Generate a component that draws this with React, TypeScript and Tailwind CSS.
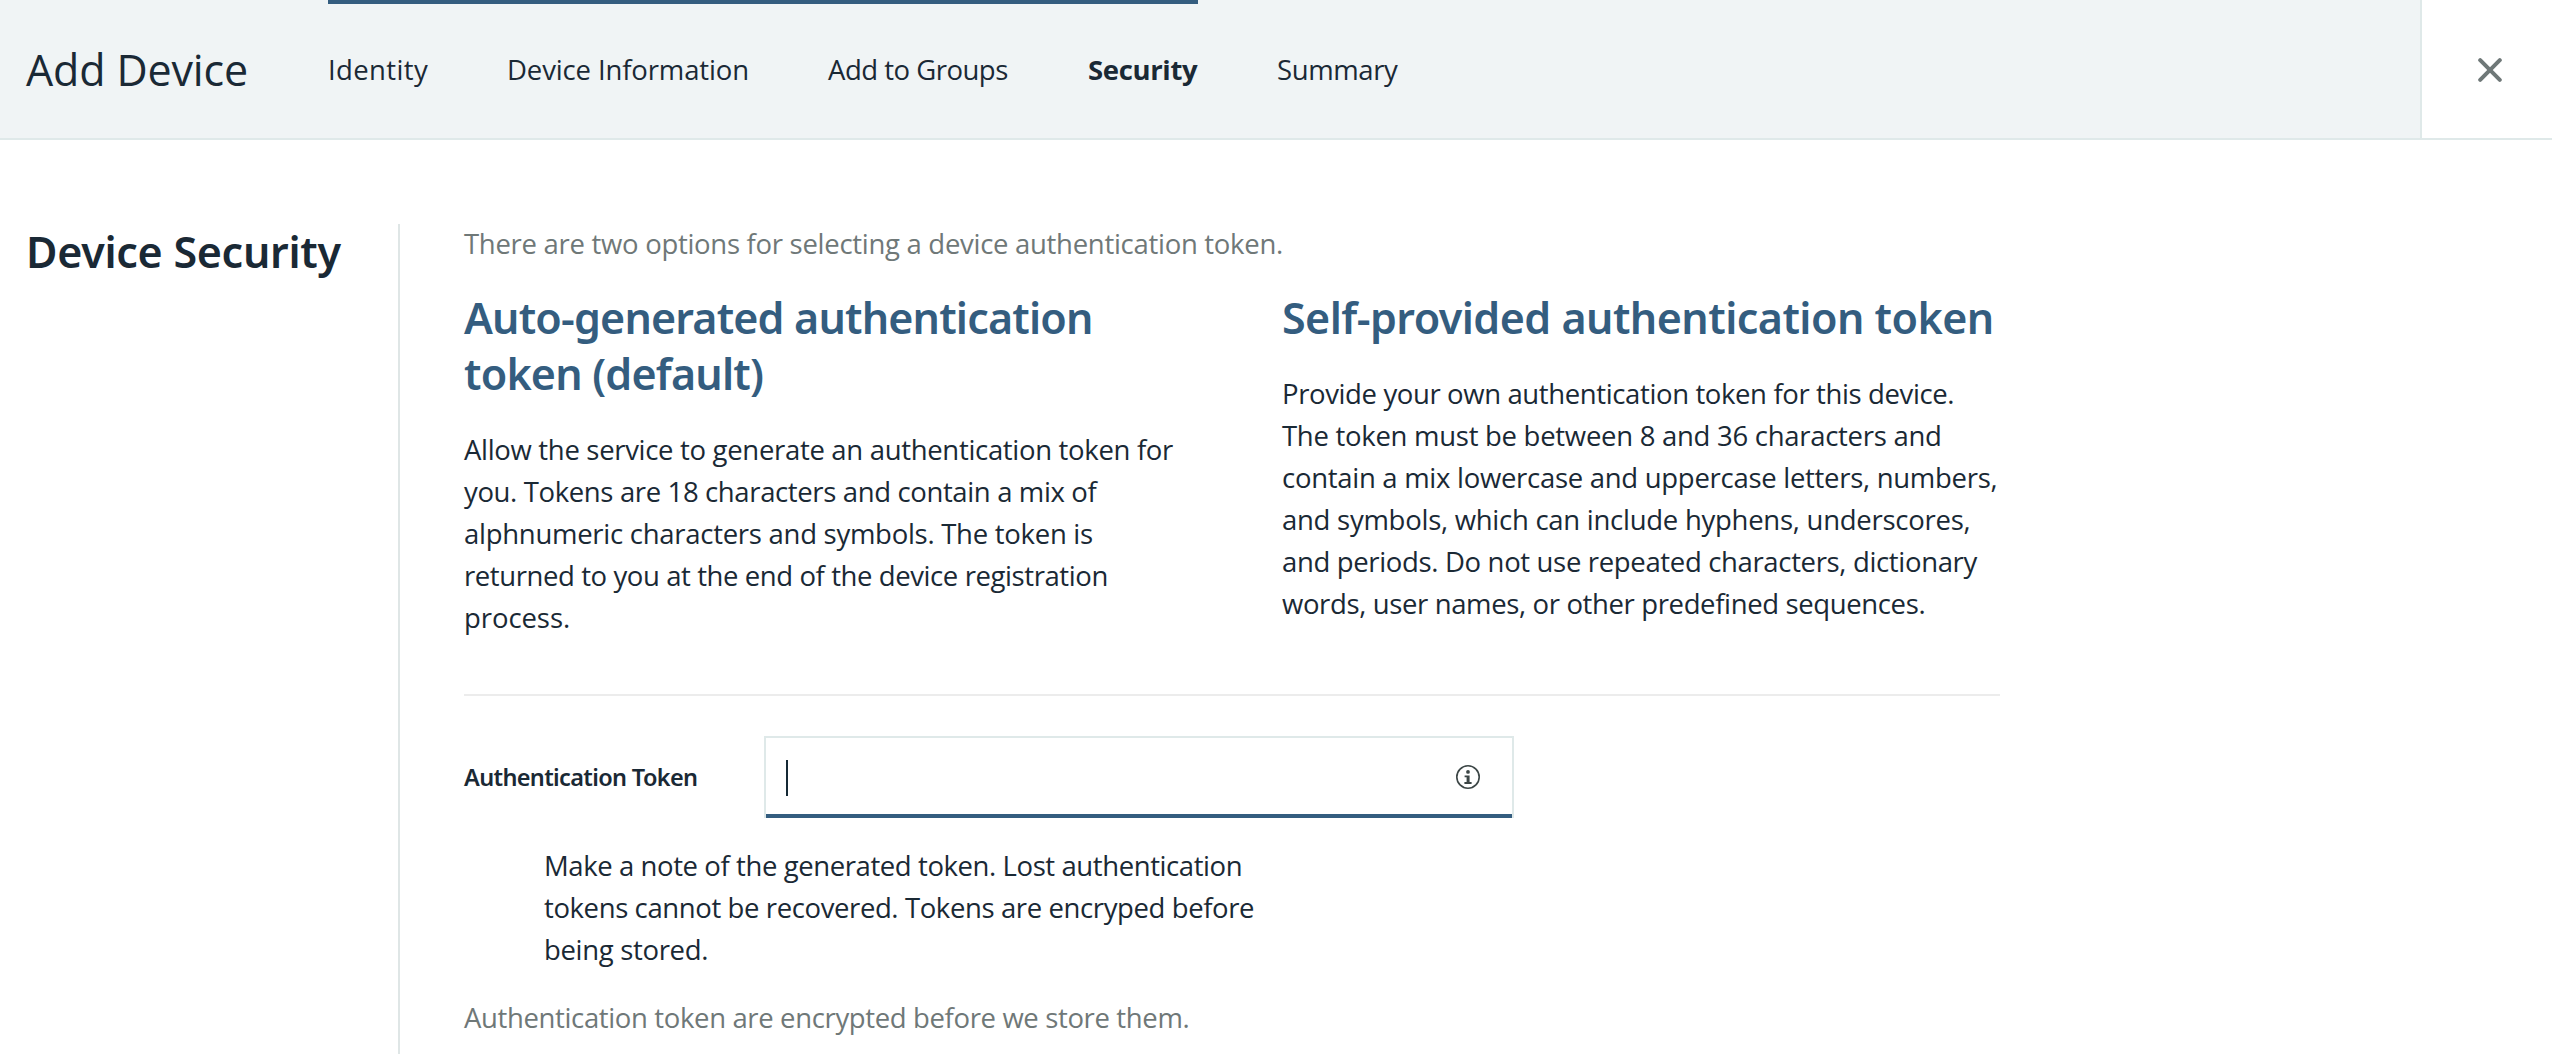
type Line = { text: string; className: string };

const steps: Line[] = [
  { text: "Identity", className: "w-[179px] tracking-[0.377px]" },
  { text: "Device Information", className: "w-[321px] tracking-[-0.134px]" },
  { text: "Add to Groups", className: "w-[260px] tracking-[-0.5px]" },
  { text: "Security", className: "w-[189px] font-bold tracking-[-0.346px]" },
  { text: "Summary", className: "tracking-[-0.397px]" },
];

const autoHeading: Line[] = [
  { text: "Auto-generated authentication", className: "tracking-[-0.822px]" },
  { text: "token (default)", className: "tracking-[-0.801px]" },
];

const autoText: Line[] = [
  { text: "Allow the service to generate an authentication token for", className: "tracking-[-0.316px]" },
  { text: "you. Tokens are 18 characters and contain a mix of", className: "tracking-[-0.364px]" },
  { text: "alphnumeric characters and symbols. The token is", className: "tracking-[-0.272px]" },
  { text: "returned to you at the end of the device registration", className: "tracking-[-0.407px]" },
  { text: "process.", className: "tracking-[-0.073px]" },
];

const selfHeading: Line[] = [
  { text: "Self-provided authentication token", className: "tracking-[-0.54px]" },
];

const selfText: Line[] = [
  { text: "Provide your own authentication token for this device.", className: "tracking-[-0.377px]" },
  { text: "The token must be between 8 and 36 characters and", className: "tracking-[-0.278px]" },
  { text: "contain a mix lowercase and uppercase letters, numbers,", className: "tracking-[-0.285px]" },
  { text: "and symbols, which can include hyphens, underscores,", className: "tracking-[-0.264px]" },
  { text: "and periods. Do not use repeated characters, dictionary", className: "tracking-[-0.34px]" },
  { text: "words, user names, or other predefined sequences.", className: "tracking-[-0.365px]" },
];

const noteText: Line[] = [
  { text: "Make a note of the generated token. Lost authentication", className: "tracking-[-0.41px]" },
  { text: "tokens cannot be recovered. Tokens are encryped before", className: "tracking-[-0.39px]" },
  { text: "being stored.", className: "tracking-[-0.33px]" },
];

function Lines({ lines }: { lines: Line[] }) {
  return (
    <>
      {lines.map((l) => (
        <span key={l.text} className={`block whitespace-nowrap ${l.className}`}>
          {l.text}
        </span>
      ))}
    </>
  );
}

function Option({ heading, body, className }: { heading: Line[]; body: Line[]; className: string }) {
  return (
    <section className={className}>
      <h2 className="font-['Noto_Sans',sans-serif] text-[43px] leading-[56px] font-semibold text-[#345d7f]">
        <Lines lines={heading} />
      </h2>
      <p className="mt-[27px]">
        <Lines lines={body} />
      </p>
    </section>
  );
}

function Header() {
  return (
    <header className="flex h-[140px] border-b-2 border-[#dfe9e9] bg-[#f0f4f5]">
      <h1 className="w-[327px] pl-[26px] pt-[42px] text-[43px] leading-[56px] whitespace-nowrap tracking-[-0.139px]">
        Add Device
      </h1>
      <nav className="flex-1">
        <div className="ml-px h-1 w-[870px] bg-[#345d7f]" />
        <ol className="mt-[45px] ml-px flex whitespace-nowrap">
          {steps.map((s) => (
            <li key={s.text} className={s.className}>
              {s.text}
            </li>
          ))}
        </ol>
      </nav>
      <button
        aria-label="Close"
        className="flex w-[132px] items-center justify-center border-l-2 border-[#dfe9e9] bg-white pt-[2px] pl-[6px]"
      >
        <svg width="24" height="24" viewBox="0 0 24 24" fill="none" stroke="#6f7878" strokeWidth="4" strokeLinecap="round">
          <path d="M2.2 2.2L21.8 21.8M21.8 2.2L2.2 21.8" />
        </svg>
      </button>
    </header>
  );
}

function TokenField() {
  return (
    <div className="mt-10 flex">
      <label className="w-[300px] pt-[20px] font-['Noto_Sans',sans-serif] text-[23.5px] font-semibold whitespace-nowrap tracking-[-0.65px]">
        Authentication Token
      </label>
      <div className="flex h-[82px] w-[750px] border-x-2 border-t-2 border-[#dfe9e9]">
        <div className="flex flex-1 items-start justify-between border-b-4 border-[#345d7f] pl-5 pr-8">
          <span className="mt-[22px] h-9 w-[2px] bg-[#152935]" />
          <svg className="mt-[27px]" width="24" height="24" viewBox="0 0 24 24" fill="#3c4646">
            <circle cx="12" cy="12" r="11.2" fill="none" stroke="#3c4646" strokeWidth="1.6" />
            <circle cx="12" cy="6.9" r="1.9" />
            <path d="M8.6 10.4h5v6.7h2v1.8H8.4v-1.8h2.2v-4.9h-2z" />
          </svg>
        </div>
      </div>
    </div>
  );
}

export default function App() {
  return (
    <div className="h-[1054px] overflow-hidden bg-white font-['Open_Sans',sans-serif] text-[27.5px] leading-[42px] text-[#1a2935]">
      <Header />
      <main className="flex h-[914px]">
        <h2 className="w-[398px] pl-[26px] pt-[84px] font-['Noto_Sans',sans-serif] text-[43px] leading-[56px] font-semibold whitespace-nowrap tracking-[-0.285px]">
          Device Security
        </h2>
        <div className="mt-[84px] w-[1602px] border-l-2 border-[#dfe6e6] pl-16">
          <p className="-mt-px tracking-[-0.289px] text-[#6f7878]">
            There are two options for selecting a device authentication token.
          </p>
          <div className="mt-[25px] flex">
            <Option className="w-[818px]" heading={autoHeading} body={autoText} />
            <Option className="w-[718px]" heading={selfHeading} body={selfText} />
          </div>
          <hr className="mt-[55px] border-t-2 border-[#ececec]" />
          <TokenField />
          <p className="mt-[27px] pl-20">
            <Lines lines={noteText} />
          </p>
          <p className="mt-[26px] tracking-[-0.359px] text-[#6f7878]">
            Authentication token are encrypted before we store them.
          </p>
        </div>
      </main>
    </div>
  );
}
